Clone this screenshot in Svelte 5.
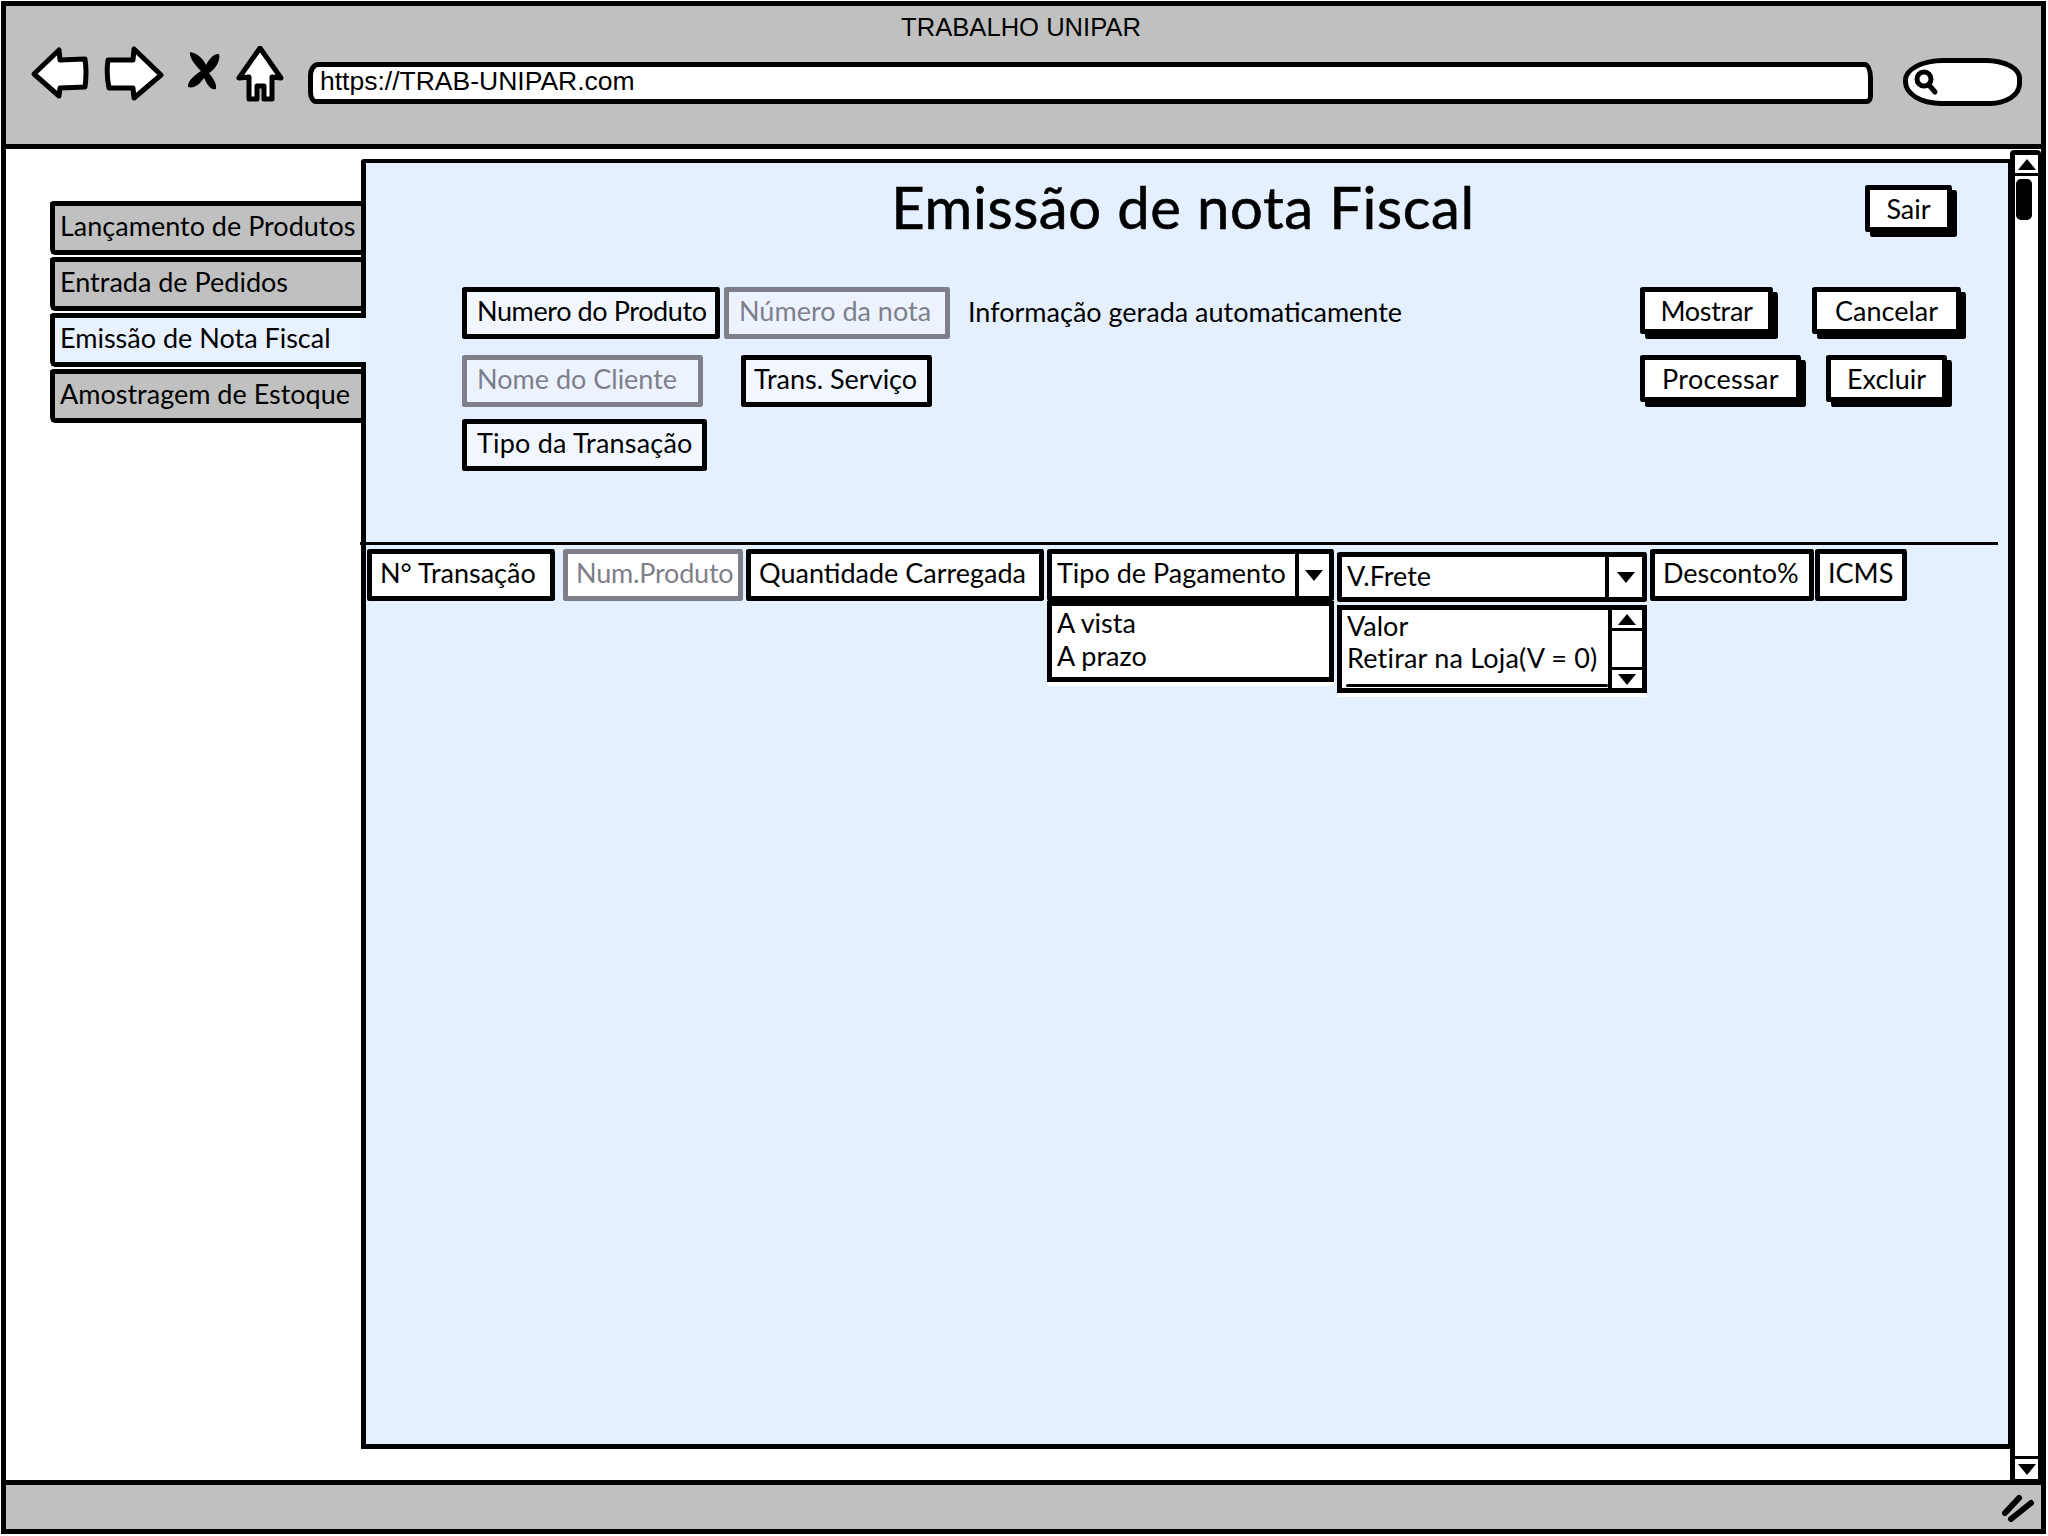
<script lang="ts">
  const tabs = [
    { label: 'Lançamento de Produtos', active: false },
    { label: 'Entrada de Pedidos', active: false },
    { label: 'Emissão de Nota Fiscal', active: true },
    { label: 'Amostragem de Estoque', active: false },
  ];

  const columns = [
    { label: 'N° Transação', w: 188, gap: 8 },
    { label: 'Num.Produto', w: 180, gap: 3, muted: true },
    { label: 'Quantidade Carregada', w: 298, gap: 3 },
  ];
</script>

<div class="window">
  <!-- Browser chrome -->
  <header class="chrome">
    <div class="chrome__title">TRABALHO UNIPAR</div>
    <div class="chrome__tools">
      <svg class="nav" width="272" height="60" viewBox="28 46 272 60" aria-hidden="true">
        <path class="nav__shape" d="M34 74 L59 50 L60 60 L85 59 Q87 72 85 87 L60 88 L59 96 Z" />
        <path class="nav__shape" d="M161 75 L134 49 L133 60 L108 60 Q106 74 109 88 L133 88 L134 98 Z" />
        <path d="M190 52 C198 53 204 60 206 65 C209 59 214 53 219 54 C221 60 215 70 209 73 C213 78 217 84 216 89 C210 91 206 82 204 78 C200 84 194 89 188 87 C187 81 196 74 201 71 C196 66 189 58 190 52 Z" />
        <path class="nav__shape" d="M260 48 L239 78 L249 77 L249 99 L257 99 L257 86 L264 86 L264 99 L272 99 L272 77 L281 78 Z" />
      </svg>
      <div class="url">https://TRAB-UNIPAR.com</div>
      <div class="search">
        <svg width="28" height="30" viewBox="0 0 28 30" aria-hidden="true">
          <circle cx="11" cy="12" r="7" fill="none" stroke="#000" stroke-width="5" />
          <path d="M16 18 L22 25" stroke="#000" stroke-width="5" stroke-linecap="round" />
        </svg>
      </div>
    </div>
  </header>

  <div class="content">
    <!-- Left tabs -->
    <nav class="tabs">
      {#each tabs as tab}
        <div class="tab" class:tab--active={tab.active}>{tab.label}</div>
      {/each}
    </nav>

    <!-- Main panel -->
    <main class="panel">
      <div class="panel__head">
        <span></span>
        <h1 class="panel__title">Emissão de nota Fiscal</h1>
        <button class="btn btn--sair">Sair</button>
      </div>

      <section class="form">
        <div class="form__fields">
          <div class="form__row form__row--first">
            <span class="field field--numero">Numero do Produto</span>
            <span class="field field--nota field--muted">Número da nota</span>
            <span class="form__note">Informação gerada automaticamente</span>
          </div>
          <div class="form__row form__row--second">
            <span class="field field--cliente field--muted">Nome do Cliente</span>
            <span class="field field--servico">Trans. Serviço</span>
          </div>
          <div class="form__row">
            <span class="field field--tipo">Tipo da Transação</span>
          </div>
        </div>
        <div class="form__actions">
          <div class="form__actions-row">
            <button class="btn btn--mostrar">Mostrar</button>
            <button class="btn btn--cancelar">Cancelar</button>
          </div>
          <div class="form__actions-row form__actions-row--tight">
            <button class="btn btn--processar">Processar</button>
            <button class="btn btn--excluir">Excluir</button>
          </div>
        </div>
      </section>

      <hr class="rule" />

      <section class="grid-head">
        {#each columns as col}
          <span
            class="cell"
            class:cell--muted={col.muted}
            style="width: {col.w}px; margin-right: {col.gap}px"
          >{col.label}</span>
        {/each}

        <div class="combo combo--pagamento">
          <div class="combo__head">
            <span class="combo__label">Tipo de Pagamento</span>
            <span class="combo__arrow"><i class="tri tri--down"></i></span>
          </div>
          <div class="list">
            <div>A vista</div>
            <div>A prazo</div>
          </div>
        </div>

        <div class="combo combo--frete">
          <div class="combo__head">
            <span class="combo__label">V.Frete</span>
            <span class="combo__arrow"><i class="tri tri--down"></i></span>
          </div>
          <div class="list list--scroll">
            <div class="list__items">
              <div>Valor</div>
              <div class="list__retirar">Retirar na Loja(V = 0)</div>
              <div class="list__scribble"></div>
            </div>
            <div class="list__bar">
              <span class="list__btn"><i class="tri tri--up"></i></span>
              <span class="list__btn list__btn--down"><i class="tri tri--down"></i></span>
            </div>
          </div>
        </div>

        <span class="cell cell--desconto">Desconto%</span>
        <span class="cell cell--icms">ICMS</span>
      </section>
    </main>

    <!-- Page scrollbar -->
    <aside class="scroll">
      <span class="scroll__btn"><i class="tri tri--up"></i></span>
      <span class="scroll__thumb"></span>
      <span class="scroll__btn scroll__btn--down"><i class="tri tri--down"></i></span>
    </aside>
  </div>

  <!-- Status bar -->
  <footer class="status">
    <svg width="36" height="30" viewBox="0 0 36 30" aria-hidden="true">
      <path d="M5 21 L19 6 M11 27 L31 11" stroke="#000" stroke-width="6" stroke-linecap="round" />
    </svg>
  </footer>
</div>

<style>
  :global(body) {
    background: #fff;
  }

  .window {
    box-sizing: border-box;
    display: flex;
    flex-direction: column;
    width: 2045px;
    height: 1533px;
    margin: 1px 2px 2px 1px;
    border: 5px solid #000;
    background: #fff;
    font-family: Lato, "Noto Sans", sans-serif;
    font-size: 27px;
    color: #000;
  }

  /* ── Chrome ─────────────────────────────────────── */
  .chrome {
    box-sizing: border-box;
    height: 143px;
    flex-shrink: 0;
    background: #c0c0c0;
    border-bottom: 5px solid #000;
  }

  .chrome__title {
    height: 40px;
    padding-top: 7px;
    box-sizing: border-box;
    text-align: center;
    font-family: "Liberation Sans", Arial, sans-serif;
    font-size: 25.6px;
    line-height: 28px;
    margin-right: 5px;
  }

  .chrome__tools {
    display: flex;
    align-items: flex-start;
    padding-left: 22px;
  }

  .nav path {
    stroke-linejoin: round;
  }

  .nav__shape {
    fill: #fff;
    stroke: #000;
    stroke-width: 5;
  }

  .url {
    box-sizing: border-box;
    width: 1565px;
    height: 42px;
    margin: 16px 0 0 8px;
    padding-left: 7px;
    background: #fff;
    border: 5px solid #000;
    border-radius: 10px 8px 6px 8px / 14px 16px 8px 12px;
    font-family: "Liberation Sans", Arial, sans-serif;
    font-size: 26.5px;
    line-height: 28px;
  }

  .search {
    box-sizing: border-box;
    display: flex;
    align-items: center;
    width: 119px;
    height: 48px;
    margin: 12px 0 0 30px;
    padding-left: 5px;
    background: #fff;
    border: 5px solid #000;
    border-radius: 40px 36px 32px 38px / 22px 20px 22px 24px;
  }

  /* ── Content ────────────────────────────────────── */
  .content {
    flex: 1;
    display: grid;
    grid-template-columns: 311px 1651px 30px;
    padding-left: 44px;
    min-height: 0;
  }

  .tabs {
    display: flex;
    flex-direction: column;
    gap: 2px;
    margin-top: 52px;
    position: relative;
    z-index: 1;
  }

  .tab {
    box-sizing: border-box;
    height: 54px;
    padding-left: 5px;
    background: #c0c0c0;
    border: 5px solid #000;
    border-right: none;
    border-radius: 4px 0 0 5px / 3px 0 0 6px;
    line-height: 40px;
    white-space: nowrap;
  }

  .tab--active {
    width: 316px;
    background: #e8f1fe;
  }

  /* ── Panel ──────────────────────────────────────── */
  .panel {
    box-sizing: border-box;
    height: 1290px;
    margin-top: 10px;
    background: #e5f0fe;
    border: 5px solid #000;
    border-top-width: 4px;
    border-right-width: 4px;
    border-radius: 3px 0 0 0;
  }

  .panel__head {
    display: grid;
    grid-template-columns: 1fr auto 1fr;
    align-items: start;
    margin-top: 22px;
    height: 52px;
    padding: 0 56px 0 48px;
  }

  .panel__title {
    margin: -4px 0 0;
    font-size: 58px;
    font-weight: 400;
    letter-spacing: 0.6px;
    line-height: 52px;
    white-space: nowrap;
    -webkit-text-stroke: 0.6px #000;
  }

  .btn {
    box-sizing: border-box;
    height: 47px;
    padding: 0;
    background: #fff;
    border: 5px solid #000;
    border-radius: 3px 2px 4px 2px / 2px 4px 2px 3px;
    box-shadow: 5px 5px 0 #000;
    font: inherit;
    color: inherit;
    line-height: 36px;
  }

  .btn--sair { width: 87px; justify-self: end; }
  .btn--mostrar { width: 133px; letter-spacing: -0.3px; }
  .btn--cancelar { width: 149px; }
  .btn--processar { width: 161px; letter-spacing: 0.3px; }
  .btn--excluir { width: 121px; }

  .form {
    display: flex;
    margin-top: 50px;
    padding-left: 96px;
  }

  .form__fields {
    width: 1178px;
    flex-shrink: 0;
  }

  .form__row {
    display: flex;
    align-items: center;
    height: 52px;
  }

  .form__row--first { gap: 4px; margin-bottom: 16px; }
  .form__row--second { gap: 38px; margin-bottom: 12px; }

  .form__note {
    margin: 0 0 3px 14px;
    white-space: nowrap;
  }

  .field {
    box-sizing: border-box;
    height: 52px;
    padding-left: 10px;
    background: #f2f7ff;
    border: 5px solid #000;
    border-radius: 3px 2px 4px 2px / 2px 4px 2px 3px;
    line-height: 38px;
    white-space: nowrap;
  }

  .field--muted {
    color: #7f7f8b;
    border-color: #7f7f8b;
    background: #ecf3fe;
  }

  .field--numero { width: 258px; letter-spacing: -0.4px; }
  .field--nota { width: 226px; }
  .field--cliente { width: 241px; }
  .field--servico { width: 191px; padding-left: 8px; }
  .field--tipo { width: 245px; letter-spacing: 0.2px; }

  .form__actions {
    display: flex;
    flex-direction: column;
    gap: 21px;
  }

  .form__actions-row {
    display: flex;
    gap: 39px;
  }

  .form__actions-row--tight {
    gap: 25px;
  }

  .rule {
    height: 3px;
    width: 1638px;
    margin: 71px 0 0 -6px;
    border: none;
    background: #000;
  }

  /* ── Column headers ─────────────────────────────── */
  .grid-head {
    display: flex;
    align-items: flex-start;
    margin-top: 4px;
    padding-left: 1px;
  }

  .cell {
    box-sizing: border-box;
    height: 52px;
    padding-left: 8px;
    background: #fff;
    border: 5px solid #000;
    border-radius: 3px 2px 4px 2px / 2px 4px 2px 3px;
    line-height: 38px;
    white-space: nowrap;
  }

  .cell--muted {
    color: #7f7f8b;
    border-color: #7f7f8b;
    letter-spacing: -0.2px;
  }

  .cell--desconto { width: 164px; margin-left: 3px; margin-right: 1px; }
  .cell--icms { width: 92px; }

  .combo {
    flex-shrink: 0;
  }

  .combo--pagamento { width: 287px; }
  .combo--frete { width: 310px; margin-left: 3px; margin-top: 3px; }

  .combo__head {
    box-sizing: border-box;
    display: flex;
    height: 52px;
    background: #fff;
    border: 5px solid #000;
    border-radius: 3px 2px 4px 2px / 2px 4px 2px 3px;
  }

  .combo--frete .combo__head { height: 50px; }

  .combo__label {
    flex: 1;
    padding-left: 5px;
    line-height: 38px;
    white-space: nowrap;
  }

  .combo__arrow {
    display: flex;
    align-items: center;
    justify-content: center;
    width: 30px;
    border-left: 4px solid #000;
  }

  .combo--frete .combo__arrow {
    width: 33px;
  }

  .tri {
    display: block;
    width: 0;
    height: 0;
    border-left: 9px solid transparent;
    border-right: 9px solid transparent;
  }

  .tri--down { border-top: 11px solid #000; }
  .tri--up { border-bottom: 11px solid #000; }

  .list {
    box-sizing: border-box;
    height: 81px;
    padding: 0 0 0 5px;
    background: #fff;
    border: 5px solid #000;
    box-shadow: 0 4px 0 #fff;
    line-height: 33px;
  }

  .list--scroll {
    display: flex;
    height: 88px;
    margin-top: 3px;
    padding: 0;
    line-height: 32px;
  }

  .list__items {
    flex: 1;
    min-width: 0;
    padding: 0 0 0 5px;
    white-space: nowrap;
  }

  .list__retirar {
    letter-spacing: 0.2px;
  }

  .list__scribble {
    height: 3px;
    margin: 10px 0 0 -1px;
    background: #000;
    border-radius: 2px;
  }

  .list__bar {
    box-sizing: border-box;
    display: flex;
    flex-direction: column;
    justify-content: space-between;
    width: 34px;
    border-left: 4px solid #000;
  }

  .list__btn {
    display: flex;
    align-items: center;
    justify-content: center;
    height: 18px;
    border-bottom: 3px solid #000;
  }

  .list__btn--down {
    border-bottom: none;
    border-top: 3px solid #000;
  }

  /* ── Page scrollbar ─────────────────────────────── */
  .scroll {
    box-sizing: border-box;
    position: relative;
    display: flex;
    flex-direction: column;
    height: 1331px;
    margin: 1px 0 0 -2px;
    width: 31px;
    background: #fff;
    border: 5px solid #000;
    border-bottom-width: 2px;
    border-right-width: 3px;
    border-radius: 4px 4px 0 0;
  }

  .scroll__btn {
    display: flex;
    align-items: center;
    justify-content: center;
    height: 18px;
    border-bottom: 3px solid #000;
  }

  .scroll__btn--down {
    height: 20px;
    margin-top: auto;
    border-bottom: none;
    border-top: 3px solid #000;
  }

  .scroll__thumb {
    width: 16px;
    height: 41px;
    margin: 3px 0 0 1px;
    background: #000;
    border-radius: 5px;
  }

  /* ── Status ─────────────────────────────────────── */
  .status {
    box-sizing: border-box;
    display: flex;
    justify-content: flex-end;
    align-items: center;
    height: 49px;
    flex-shrink: 0;
    padding-right: 5px;
    background: #c0c0c0;
    border-top: 5px solid #000;
  }
</style>
